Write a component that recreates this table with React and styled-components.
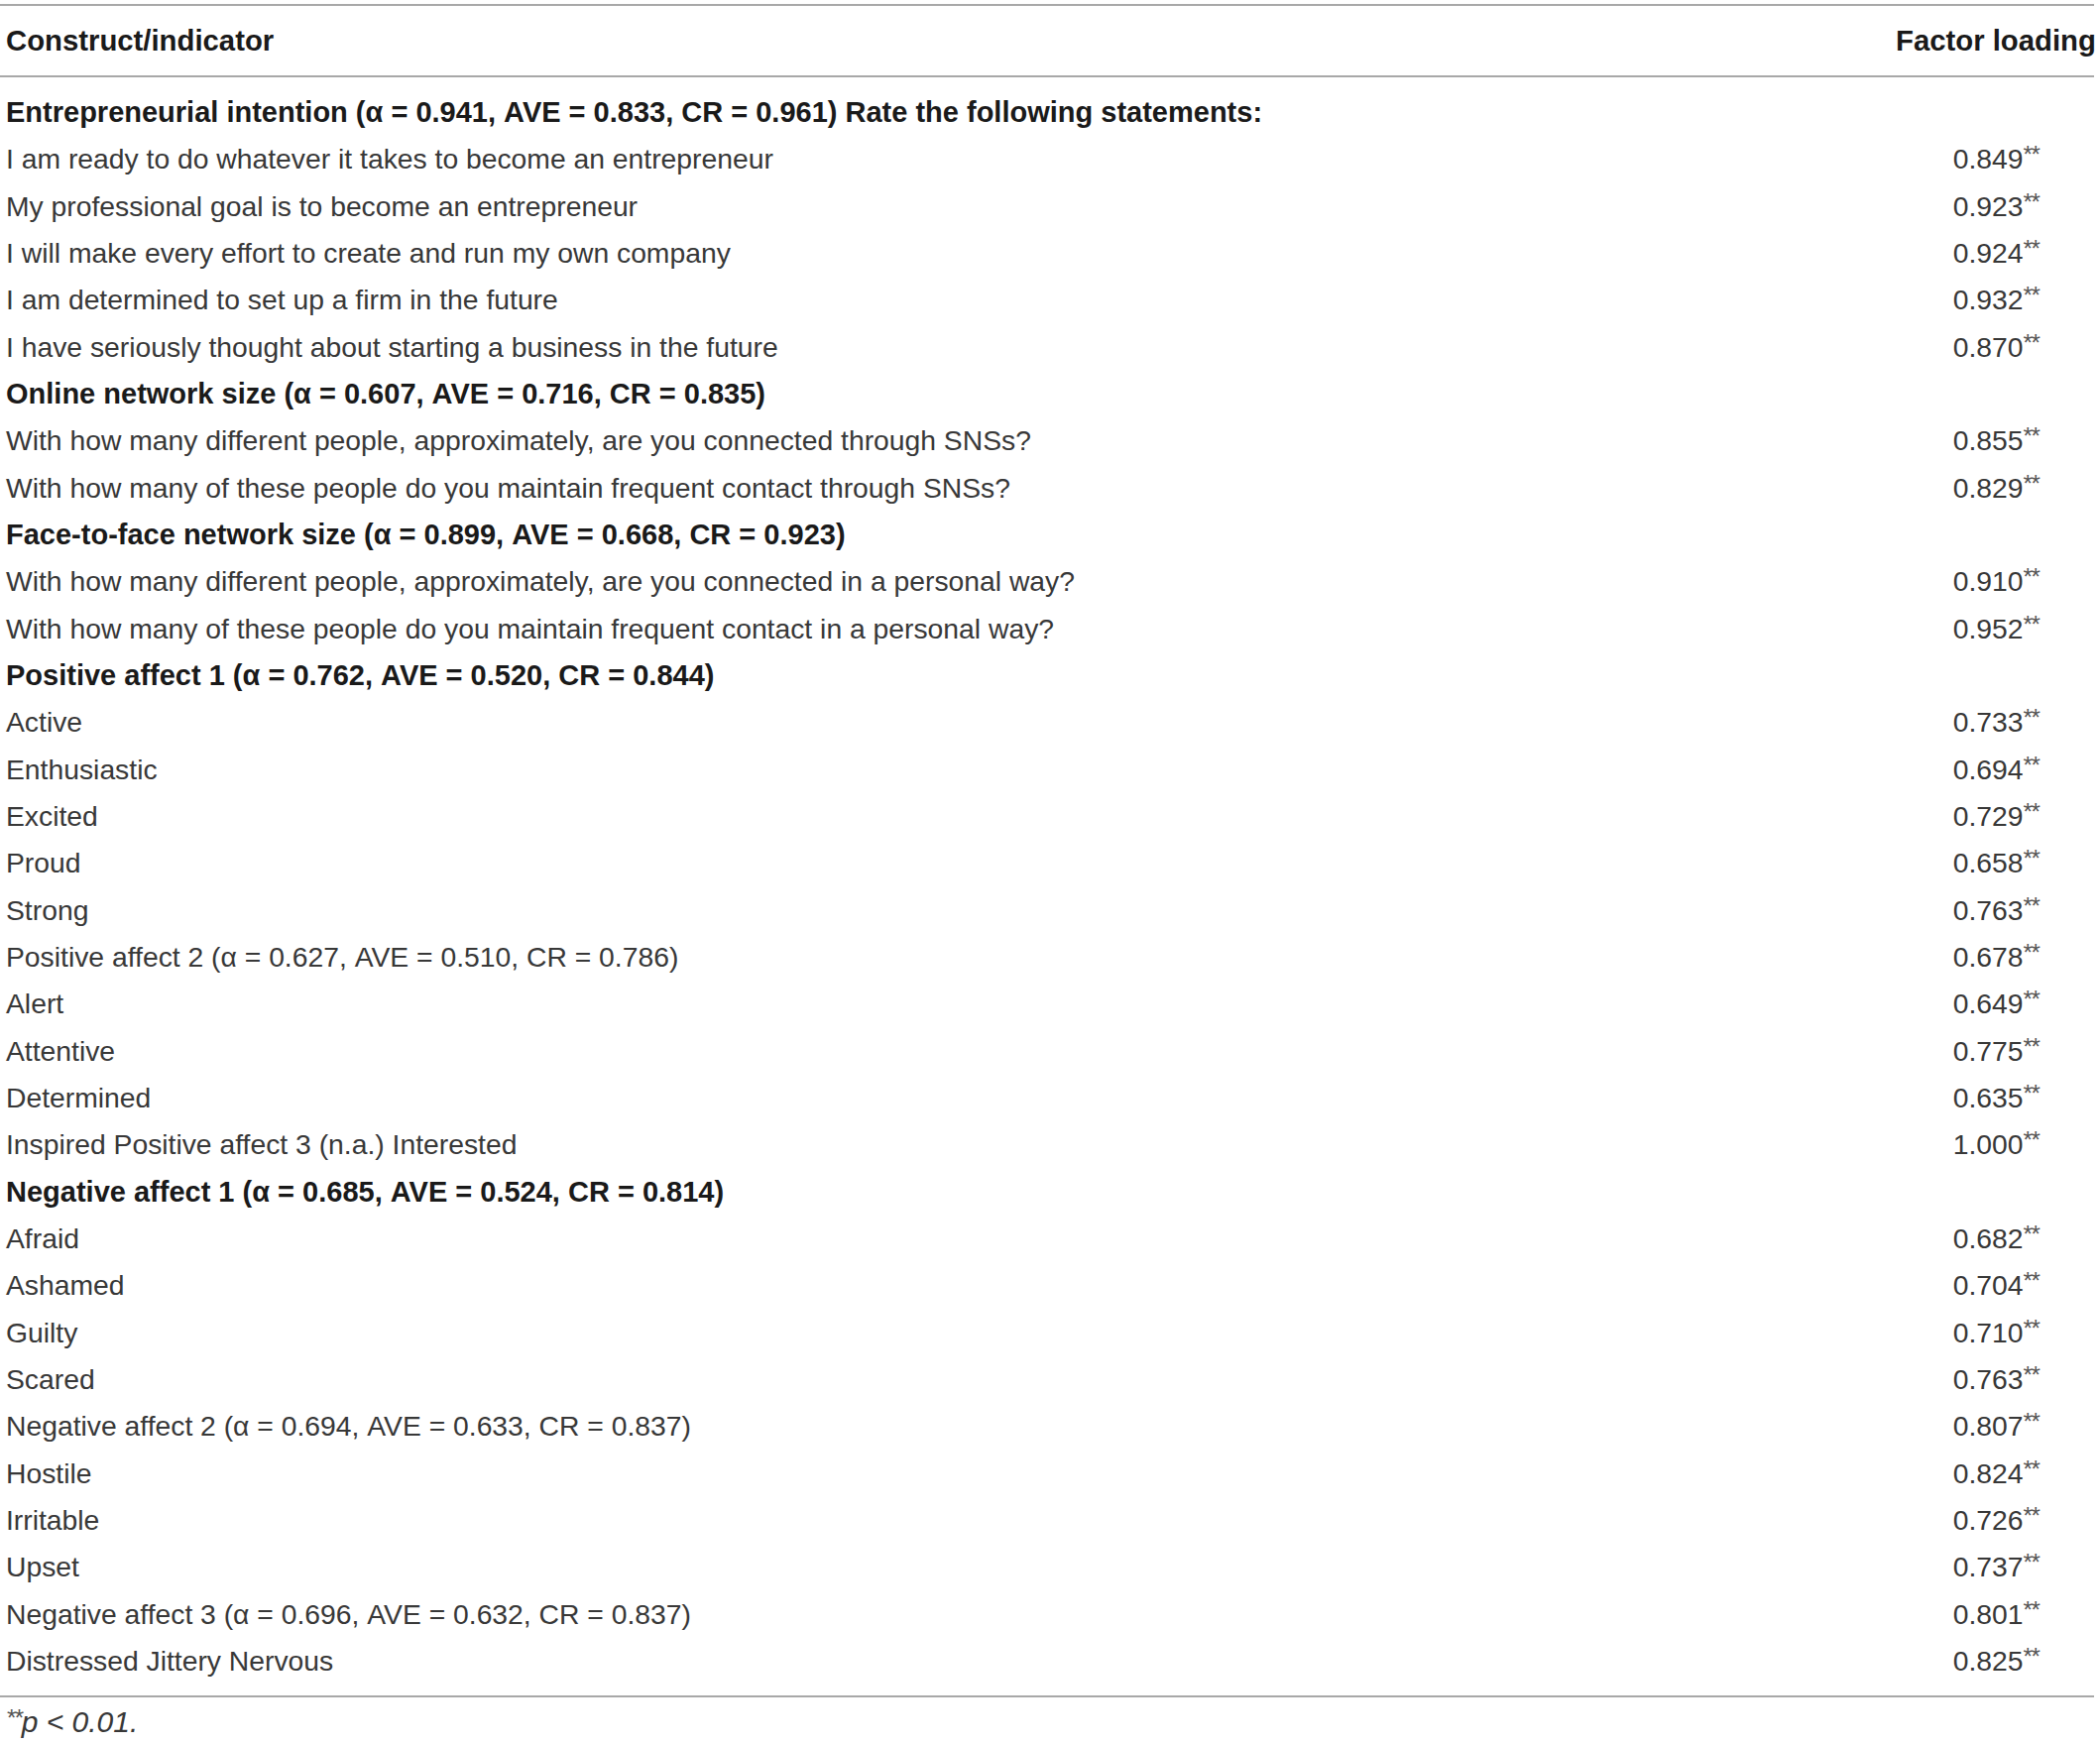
import React from "react";
import styled, { createGlobalStyle } from "styled-components";

const Global = createGlobalStyle`
  html, body { margin: 0; padding: 0; background: #fff; }
  body { font-family: "Liberation Sans", Arial, sans-serif; color: #2a2a2a; }
`;

const Table = styled.div`
  width: 2112px;
  padding-top: 4px;
`;

const Rule = styled.div`
  height: 2px;
  background: #a8a8a8;
`;

const Row = styled.div`
  display: grid;
  grid-template-columns: 1fr 200px;
  align-items: center;
  height: ${(p) => p.$h || 47.33}px;
  padding-left: 6px;
`;

const Cell = styled.div`
  font-size: ${(p) => (p.$bold ? 29 : 28.3)}px;
  font-weight: ${(p) => (p.$bold ? 700 : 400)};
  color: ${(p) => (p.$bold ? "#1a1a1a" : "#383838")};
  white-space: nowrap;
`;

const Num = styled.div`
  font-size: 28.3px;
  color: #383838;
  text-align: center;
  padding-left: 2px;
`;

const HeadCell = styled.div`
  font-size: 29.3px;
  font-weight: 700;
  color: #1a1a1a;
  text-align: ${(p) => (p.$right ? "right" : "left")};
  white-space: nowrap;
`;

const Stars = styled.sup`
  font-size: 24px;
  vertical-align: 6px;
  line-height: 0;
  letter-spacing: -1.5px;
  color: #555;
`;

const Body = styled.div`
  padding: 12px 0 11px;
`;

const Note = styled.div`
  font-size: 30px;
  font-style: italic;
  color: #383838;
  padding: 8px 0 0 6px;
`;

const rows = [
  ["Entrepreneurial intention (α = 0.941, AVE = 0.833, CR = 0.961) Rate the following statements:", null, true],
  ["I am ready to do whatever it takes to become an entrepreneur", "0.849"],
  ["My professional goal is to become an entrepreneur", "0.923"],
  ["I will make every effort to create and run my own company", "0.924"],
  ["I am determined to set up a firm in the future", "0.932"],
  ["I have seriously thought about starting a business in the future", "0.870"],
  ["Online network size (α = 0.607, AVE = 0.716, CR = 0.835)", null, true],
  ["With how many different people, approximately, are you connected through SNSs?", "0.855"],
  ["With how many of these people do you maintain frequent contact through SNSs?", "0.829"],
  ["Face-to-face network size (α = 0.899, AVE = 0.668, CR = 0.923)", null, true],
  ["With how many different people, approximately, are you connected in a personal way?", "0.910"],
  ["With how many of these people do you maintain frequent contact in a personal way?", "0.952"],
  ["Positive affect 1 (α = 0.762, AVE = 0.520, CR = 0.844)", null, true],
  ["Active", "0.733"],
  ["Enthusiastic", "0.694"],
  ["Excited", "0.729"],
  ["Proud", "0.658"],
  ["Strong", "0.763"],
  ["Positive affect 2 (α = 0.627, AVE = 0.510, CR = 0.786)", "0.678"],
  ["Alert", "0.649"],
  ["Attentive", "0.775"],
  ["Determined", "0.635"],
  ["Inspired Positive affect 3 (n.a.) Interested", "1.000"],
  ["Negative affect 1 (α = 0.685, AVE = 0.524, CR = 0.814)", null, true],
  ["Afraid", "0.682"],
  ["Ashamed", "0.704"],
  ["Guilty", "0.710"],
  ["Scared", "0.763"],
  ["Negative affect 2 (α = 0.694, AVE = 0.633, CR = 0.837)", "0.807"],
  ["Hostile", "0.824"],
  ["Irritable", "0.726"],
  ["Upset", "0.737"],
  ["Negative affect 3 (α = 0.696, AVE = 0.632, CR = 0.837)", "0.801"],
  ["Distressed Jittery Nervous", "0.825"],
];

export default function App() {
  return (
    <>
      <Global />
      <Table>
        <Rule />
        <Row $h={70}>
          <HeadCell>Construct/indicator</HeadCell>
          <HeadCell $right>Factor loading</HeadCell>
        </Row>
        <Rule />
        <Body>
          {rows.map(([label, val, bold], i) => (
            <Row key={i}>
              <Cell $bold={bold}>{label}</Cell>
              {val ? (
                <Num>
                  {val}
                  <Stars>**</Stars>
                </Num>
              ) : (
                <span />
              )}
            </Row>
          ))}
        </Body>
        <Rule />
        <Note>
          <Stars>**</Stars>p &lt; 0.01.
        </Note>
      </Table>
    </>
  );
}
